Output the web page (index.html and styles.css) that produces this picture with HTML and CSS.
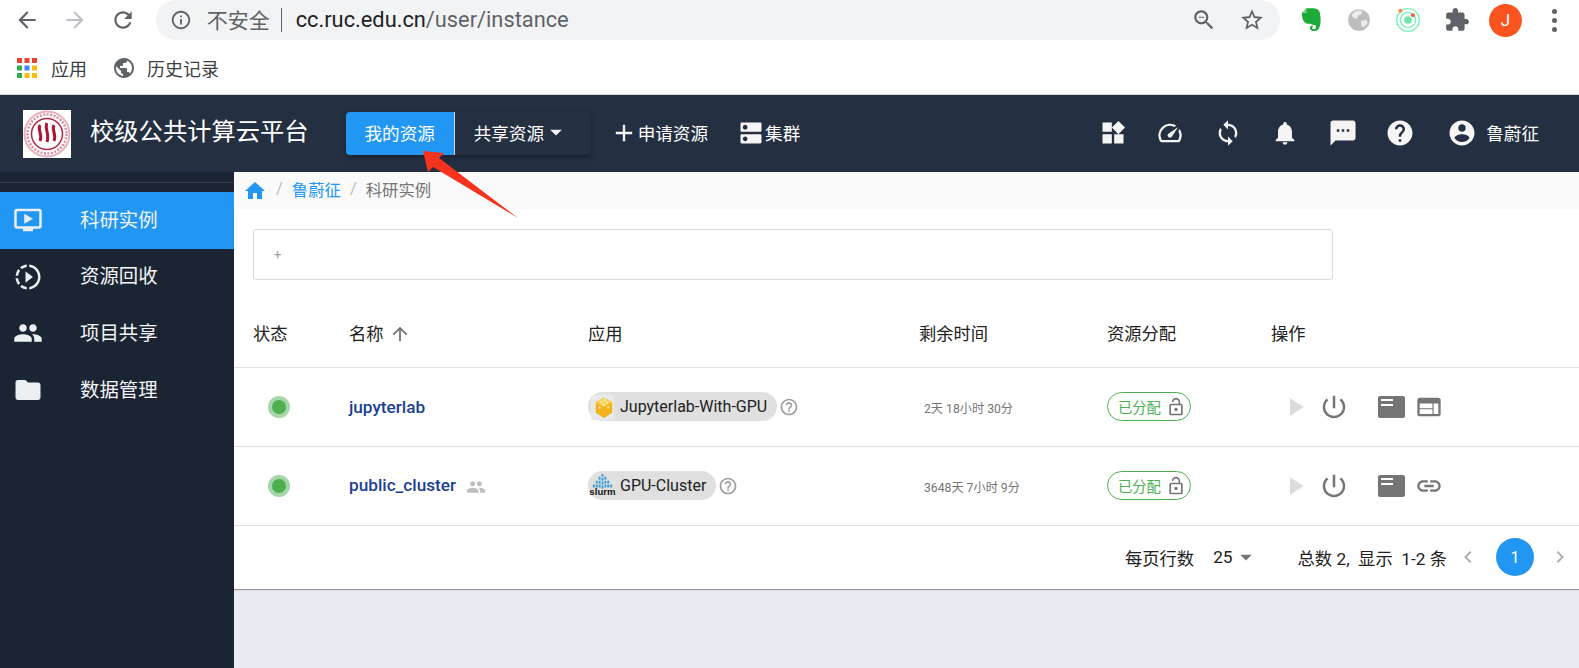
FILE: index.html
```html
<!DOCTYPE html>
<html lang="zh-CN">
<head>
<meta charset="utf-8">
<title>校级公共计算云平台</title>
<link rel="stylesheet" href="styles.css">
</head>
<body>
<svg class="defs" width="0" height="0" aria-hidden="true">
<symbol id="i-back" viewBox="0 0 24 24"><path d="M20 11H7.83l5.59-5.59L12 4l-8 8 8 8 1.41-1.41L7.83 13H20v-2z"/></symbol>
<symbol id="i-forward" viewBox="0 0 24 24"><path d="M12 4l-1.41 1.41L16.17 11H4v2h12.17l-5.58 5.59L12 20l8-8z"/></symbol>
<symbol id="i-refresh" viewBox="0 0 24 24"><path d="M17.65 6.35C16.2 4.9 14.21 4 12 4c-4.42 0-7.99 3.58-7.99 8s3.57 8 7.99 8c3.73 0 6.84-2.55 7.73-6h-2.08c-.82 2.33-3.04 4-5.65 4-3.31 0-6-2.69-6-6s2.69-6 6-6c1.66 0 3.14.69 4.22 1.78L13 11h7V4l-2.35 2.35z"/></symbol>
<symbol id="i-info" viewBox="0 0 24 24"><path d="M11 7h2v2h-2zm0 4h2v6h-2zm1-9C6.48 2 2 6.48 2 12s4.48 10 10 10 10-4.48 10-10S17.52 2 12 2zm0 18c-4.41 0-8-3.59-8-8s3.59-8 8-8 8 3.59 8 8-3.59 8-8 8z"/></symbol>
<symbol id="i-zoom" viewBox="0 0 24 24"><path d="M15.5 14h-.79l-.28-.27C15.41 12.59 16 11.11 16 9.5 16 5.91 13.09 3 9.5 3S3 5.91 3 9.5 5.91 16 9.5 16c1.61 0 3.09-.59 4.23-1.57l.27.28v.79l5 4.99L20.49 19l-4.99-5zm-6 0C7.01 14 5 11.99 5 9.5S7.01 5 9.5 5 14 7.01 14 9.5 11.99 14 9.5 14zM7 9h5v1H7z"/></symbol>
<symbol id="i-star" viewBox="0 0 24 24"><path d="M22 9.24l-7.19-.62L12 2 9.19 8.63 2 9.24l5.46 4.73L5.82 21 12 17.27 18.18 21l-1.63-7.03L22 9.24zM12 15.4l-3.76 2.27 1-4.28-3.32-2.88 4.38-.38L12 6.1l1.71 4.04 4.38.38-3.32 2.88 1 4.28L12 15.4z"/></symbol>
<symbol id="i-ext" viewBox="0 0 24 24"><path d="M20.5 11H19V7c0-1.1-.9-2-2-2h-4V3.5C13 2.12 11.88 1 10.5 1S8 2.12 8 3.5V5H4c-1.1 0-1.99.9-1.99 2v3.8H3.5c1.49 0 2.7 1.21 2.7 2.7s-1.21 2.7-2.7 2.7H2V20c0 1.1.9 2 2 2h3.8v-1.5c0-1.49 1.21-2.7 2.7-2.7 1.49 0 2.7 1.21 2.7 2.7V22H17c1.1 0 2-.9 2-2v-4h1.5c1.38 0 2.5-1.12 2.5-2.5S21.88 11 20.5 11z"/></symbol>
<symbol id="i-globe" viewBox="0 0 24 24"><path d="M12 2C6.48 2 2 6.48 2 12s4.48 10 10 10 10-4.48 10-10S17.52 2 12 2zm-1 17.93c-3.95-.49-7-3.85-7-7.93 0-.62.08-1.21.21-1.79L9 15v1c0 1.1.9 2 2 2v1.93zm6.9-2.54c-.26-.81-1-1.39-1.9-1.39h-1v-3c0-.55-.45-1-1-1H8v-2h2c.55 0 1-.45 1-1V7h2c1.1 0 2-.9 2-2v-.41c2.93 1.19 5 4.06 5 7.41 0 2.08-.8 3.97-2.1 5.39z"/></symbol>
<symbol id="i-add" viewBox="0 0 24 24"><path d="M19 13h-6v6h-2v-6H5v-2h6V5h2v6h6v2z"/></symbol>
<symbol id="i-dns" viewBox="0 0 24 24"><path d="M20 13H4c-.55 0-1 .45-1 1v6c0 .55.45 1 1 1h16c.55 0 1-.45 1-1v-6c0-.55-.45-1-1-1zM7 19c-1.1 0-2-.9-2-2s.9-2 2-2 2 .9 2 2-.9 2-2 2zM20 3H4c-.55 0-1 .45-1 1v6c0 .55.45 1 1 1h16c.55 0 1-.45 1-1V4c0-.55-.45-1-1-1zM7 9c-1.1 0-2-.9-2-2s.9-2 2-2 2 .9 2 2-.9 2-2 2z"/></symbol>
<symbol id="i-caret" viewBox="0 0 24 24"><path d="M7 10l5 5 5-5z"/></symbol>
<symbol id="i-widgets" viewBox="0 0 24 24"><path d="M13 13v8h8v-8h-8zM3 21h8v-8H3v8zM3 3v8h8V3H3zm13.66-1.31L11 7.34 16.66 13l5.66-5.66-5.66-5.65z"/></symbol>
<symbol id="i-speed" viewBox="0 0 24 24"><path d="M20.38 8.57l-1.23 1.85a8 8 0 0 1-.22 7.58H5.07A8 8 0 0 1 15.58 6.85l1.85-1.23A10 10 0 0 0 3.35 19a2 2 0 0 0 1.72 1h13.85a2 2 0 0 0 1.74-1 10 10 0 0 0-.27-10.44zm-9.79 6.84a2 2 0 0 0 2.83 0l5.66-8.49-8.49 5.66a2 2 0 0 0 0 2.83z"/></symbol>
<symbol id="i-sync" viewBox="0 0 24 24"><path d="M12 4V1L8 5l4 4V6c3.31 0 6 2.69 6 6 0 1.01-.25 1.97-.7 2.8l1.46 1.46C19.54 15.03 20 13.57 20 12c0-4.42-3.58-8-8-8zm0 14c-3.31 0-6-2.69-6-6 0-1.01.25-1.97.7-2.8L5.24 7.74C4.46 8.97 4 10.43 4 12c0 4.42 3.58 8 8 8v3l4-4-4-4v3z"/></symbol>
<symbol id="i-bell" viewBox="0 0 24 24"><path d="M12 22c1.1 0 2-.9 2-2h-4c0 1.1.89 2 2 2zm6-6v-5c0-3.07-1.64-5.64-4.5-6.32V4c0-.83-.67-1.5-1.5-1.5s-1.5.67-1.5 1.5v.68C7.63 5.36 6 7.92 6 11v5l-2 2v1h16v-1l-2-2z"/></symbol>
<symbol id="i-sms" viewBox="0 0 24 24"><path d="M20 2H4c-1.1 0-1.99.9-1.99 2L2 22l4-4h14c1.1 0 2-.9 2-2V4c0-1.1-.9-2-2-2zM9 11H7V9h2v2zm4 0h-2V9h2v2zm4 0h-2V9h2v2z"/></symbol>
<symbol id="i-help" viewBox="0 0 24 24"><path d="M12 2C6.48 2 2 6.48 2 12s4.48 10 10 10 10-4.48 10-10S17.52 2 12 2zm1 17h-2v-2h2v2zm2.07-7.75l-.9.92C13.45 12.9 13 13.5 13 15h-2v-.5c0-1.1.45-2.1 1.17-2.83l1.24-1.26c.37-.36.59-.86.59-1.41 0-1.1-.9-2-2-2s-2 .9-2 2H8c0-2.21 1.79-4 4-4s4 1.79 4 4c0 .88-.36 1.68-.93 2.25z"/></symbol>
<symbol id="i-account" viewBox="0 0 24 24"><path d="M12 2C6.48 2 2 6.48 2 12s4.48 10 10 10 10-4.48 10-10S17.52 2 12 2zm0 3c1.66 0 3 1.34 3 3s-1.34 3-3 3-3-1.34-3-3 1.34-3 3-3zm0 14.2c-2.5 0-4.71-1.28-6-3.22.03-1.99 4-3.08 6-3.08 1.99 0 5.97 1.09 6 3.08-1.29 1.94-3.5 3.22-6 3.22z"/></symbol>
<symbol id="i-video" viewBox="0 0 24 24"><path d="M21 3H3c-1.11 0-2 .89-2 2v12c0 1.1.89 2 2 2h5v2h8v-2h5c1.1 0 1.99-.9 1.99-2L23 5c0-1.11-.9-2-2-2zm0 14H3V5h18v12zm-5-6l-7 4V7z"/></symbol>
<symbol id="i-slow" viewBox="0 0 24 24"><path d="M13.05 9.79L10 7.5v9l3.05-2.29L16 12zM11 4.07V2.05c-2.01.2-3.84 1-5.32 2.21L7.1 5.69A7.941 7.941 0 0 1 11 4.07zM5.69 7.1L4.26 5.68A9.949 9.949 0 0 0 2.05 11h2.02c.18-1.46.76-2.79 1.62-3.9zM4.07 13H2.05c.2 2.01 1 3.84 2.21 5.32l1.43-1.43A7.868 7.868 0 0 1 4.07 13zm1.61 6.74A9.981 9.981 0 0 0 11 21.95v-2.02a7.941 7.941 0 0 1-3.9-1.62l-1.42 1.43zM22 12c0 5.16-3.92 9.42-8.95 9.95v-2.02C16.97 19.41 20 16.05 20 12s-3.03-7.41-6.95-7.93V2.05C18.08 2.58 22 6.84 22 12z"/></symbol>
<symbol id="i-people" viewBox="0 0 24 24"><path d="M16 11c1.66 0 2.99-1.34 2.99-3S17.66 5 16 5c-1.66 0-3 1.34-3 3s1.34 3 3 3zm-8 0c1.66 0 2.99-1.34 2.99-3S9.66 5 8 5C6.34 5 5 6.34 5 8s1.34 3 3 3zm0 2c-2.33 0-7 1.17-7 3.5V19h14v-2.5c0-2.33-4.67-3.5-7-3.5zm8 0c-.29 0-.62.02-.97.05 1.16.84 1.97 1.97 1.97 3.45V19h6v-2.5c0-2.33-4.67-3.5-7-3.5z"/></symbol>
<symbol id="i-folder" viewBox="0 0 24 24"><path d="M10 4H4c-1.1 0-1.99.9-1.99 2L2 18c0 1.1.9 2 2 2h16c1.1 0 2-.9 2-2V8c0-1.1-.9-2-2-2h-8l-2-2z"/></symbol>
<symbol id="i-home" viewBox="0 0 24 24"><path d="M10 20v-6h4v6h5v-8h3L12 3 2 12h3v8z"/></symbol>
<symbol id="i-up" viewBox="0 0 24 24"><path d="M4 12l1.41 1.41L11 7.83V20h2V7.83l5.58 5.59L20 12l-8-8-8 8z"/></symbol>
<symbol id="i-qm" viewBox="0 0 24 24"><path d="M11 18h2v-2h-2v2zm1-16C6.48 2 2 6.48 2 12s4.48 10 10 10 10-4.48 10-10S17.52 2 12 2zm0 18c-4.41 0-8-3.59-8-8s3.59-8 8-8 8 3.59 8 8-3.59 8-8 8zm0-14c-2.21 0-4 1.79-4 4h2c0-1.1.9-2 2-2s2 .9 2 2c0 2-3 1.75-3 5h2c0-2.25 3-2.5 3-5 0-2.21-1.79-4-4-4z"/></symbol>
<symbol id="i-lock" viewBox="0 0 24 24"><path d="M12 17c1.1 0 2-.9 2-2s-.9-2-2-2-2 .9-2 2 .9 2 2 2zm6-9h-1V6c0-2.76-2.24-5-5-5S7 3.24 7 6h1.9c0-1.71 1.39-3.1 3.1-3.1 1.71 0 3.1 1.39 3.1 3.1v2H6c-1.1 0-2 .9-2 2v10c0 1.1.9 2 2 2h12c1.1 0 2-.9 2-2V10c0-1.1-.9-2-2-2zm0 12H6V10h12v10z"/></symbol>
<symbol id="i-play" viewBox="0 0 24 24"><path d="M8 5v14l11-7z"/></symbol>
<symbol id="i-power" viewBox="0 0 24 24"><path d="M13 3h-2v10h2V3zm4.83 2.17l-1.42 1.42C17.99 7.86 19 9.81 19 12c0 3.87-3.13 7-7 7s-7-3.13-7-7c0-2.19 1.01-4.14 2.58-5.42L6.17 5.17C4.23 6.82 3 9.26 3 12c0 4.97 4.03 9 9 9s9-4.03 9-9c0-2.74-1.23-5.18-3.17-6.83z"/></symbol>
<symbol id="i-term" viewBox="0 0 27 22"><path fill-rule="evenodd" d="M0 2C0 .9.900 0 2 0h23c1.100 0 2 .9 2 2v18c0 1.100-.9 2-2 2H2c-1.100 0-2-.9-2-2zM3 3v2h12V3zm0 5v2h12V8z"/></symbol>
<symbol id="i-web" viewBox="0 0 24 24"><path d="M20 4H4c-1.100 0-1.990.9-1.990 2L2 18c0 1.100.9 2 2 2h16c1.100 0 2-.9 2-2V6c0-1.100-.9-2-2-2zm-5 14H4v-4h11v4zm0-5H4V9h11v4zm5 5h-4V9h4v9z"/></symbol>
<symbol id="i-link" viewBox="0 0 24 24"><path d="M3.900 12c0-1.710 1.390-3.100 3.100-3.100h4V7H7c-2.760 0-5 2.240-5 5s2.240 5 5 5h4v-1.900H7c-1.710 0-3.100-1.390-3.100-3.100zM8 13h8v-2H8v2zm9-6h-4v1.900h4c1.710 0 3.100 1.390 3.100 3.100s-1.390 3.100-3.100 3.100h-4V17h4c2.760 0 5-2.240 5-5s-2.240-5-5-5z"/></symbol>
<symbol id="i-left" viewBox="0 0 24 24"><path d="M15.410 7.410L14 6l-6 6 6 6 1.410-1.410L10.830 12z"/></symbol>
<symbol id="i-right" viewBox="0 0 24 24"><path d="M10 6L8.590 7.410 13.170 12l-4.580 4.590L10 18l6-6z"/></symbol>
</svg>

<div class="browser">
  <div class="toolbar">
    <span class="tb-btn"><svg class="ic26 c-dark"><use href="#i-back"/></svg></span>
    <span class="tb-btn"><svg class="ic26 c-faint"><use href="#i-forward"/></svg></span>
    <span class="tb-btn"><svg class="ic26 c-dark"><use href="#i-refresh"/></svg></span>
    <div class="omnibox">
      <svg class="ic22 c-dark"><use href="#i-info"/></svg>
      <span class="insecure">不安全</span>
      <span class="omni-sep"></span>
      <span class="url">cc.ruc.edu.cn<span class="url-path">/user/instance</span></span>
      <span class="omni-end">
        <svg class="ic26 c-dark"><use href="#i-zoom"/></svg>
        <svg class="ic26 c-dark"><use href="#i-star"/></svg>
      </span>
    </div>
    <div class="extensions">
      <span class="ext">
        <svg class="ic28" viewBox="0 0 24 24"><path class="ever" d="M5 6l4-4h5c3 0 6 1 6.500 4 .8 4 .8 8 0 11-.6 3-2 4.500-5 4.500-2 0-3.500-1-3.500-2.500 0-1.500 1-2.200 2.200-2.200l.6 1.300c-.7 0-1 .3-1 .8 0 .7.8 1 1.700 1 1.500 0 1.800-1.800 1.300-3.500-2-.2-3-.4-4.500-1.200-1.500.3-4 0-5.300-1.700C5.500 11.500 5 9 5 6z"/><path class="ever-fold" d="M9 2v4H5z"/></svg>
      </span>
      <span class="ext">
        <svg class="ic26" viewBox="0 0 24 24"><circle class="orb" cx="12" cy="12" r="10"/><path class="orb-land" d="M7 5c3-2 6-2 8-1l-1 3-3 1-1 3-3-1-2-2zM14 13l5-1 1 3-4 4-2-2z"/></svg>
      </span>
      <span class="ext">
        <svg class="ic26" viewBox="0 0 24 24"><circle class="ring" cx="12" cy="12" r="10.500"/><circle class="ring" cx="12" cy="12" r="7"/><circle class="ring-core" cx="12" cy="12" r="3.500"/><circle class="ring-o" cx="5" cy="3.500" r="1.800"/><circle class="ring-r" cx="16.500" cy="7.500" r="1.800"/></svg>
      </span>
      <span class="ext"><svg class="ic26 c-ext"><use href="#i-ext"/></svg></span>
      <span class="ext"><span class="avatar">J</span></span>
      <span class="ext dots"><i></i><i></i><i></i></span>
    </div>
  </div>
  <div class="bookmarks">
    <svg class="apps" viewBox="0 0 20 20">
      <rect class="a-r" x="0" y="0" width="5" height="5"/><rect class="a-r" x="7.500" y="0" width="5" height="5"/><rect class="a-r" x="15" y="0" width="5" height="5"/>
      <rect class="a-g" x="0" y="7.500" width="5" height="5"/><rect class="a-b" x="7.500" y="7.500" width="5" height="5"/><rect class="a-y" x="15" y="7.500" width="5" height="5"/>
      <rect class="a-g" x="0" y="15" width="5" height="5"/><rect class="a-y" x="7.500" y="15" width="5" height="5"/><rect class="a-y" x="15" y="15" width="5" height="5"/>
    </svg>
    <span class="bm-text">应用</span>
    <svg class="ic24 c-dark bm-globe"><use href="#i-globe"/></svg>
    <span class="bm-text bm-last">历史记录</span>
  </div>
</div>

<header class="appbar">
  <svg class="logo" viewBox="0 0 48 48">
    <rect class="logo-bg" width="48" height="48"/>
    <circle class="seal" cx="24" cy="24" r="22.500"/>
    <circle class="seal-dash" cx="24" cy="24" r="19.500"/>
    <circle class="seal-in" cx="24" cy="24" r="15.500"/>
    <path class="seal-w" d="M17 15c-3 5 3 9 0 16M24 13c-3 5 3 11 0 19M31 15c-3 5 3 9 0 16"/>
  </svg>
  <h1 class="brand">校级公共计算云平台</h1>
  <div class="tabs">
    <span class="tab tab-on">我的资源</span>
    <span class="tab tab-drop">共享资源<svg class="ic28 c-white"><use href="#i-caret"/></svg></span>
  </div>
  <span class="nav-link nav-add"><svg class="ic28 c-white"><use href="#i-add"/></svg>申请资源</span>
  <span class="nav-link nav-cluster"><svg class="ic28 c-white"><use href="#i-dns"/></svg>集群</span>
  <div class="appbar-right">
    <span class="bar-ic"><svg class="ic28 c-white"><use href="#i-widgets"/></svg></span>
    <span class="bar-ic"><svg class="ic28 c-white"><use href="#i-speed"/></svg></span>
    <span class="bar-ic"><svg class="ic28 c-white"><use href="#i-sync"/></svg></span>
    <span class="bar-ic"><svg class="ic28 c-white"><use href="#i-bell"/></svg></span>
    <span class="bar-ic"><svg class="ic30 c-white"><use href="#i-sms"/></svg></span>
    <span class="bar-ic"><svg class="ic30 c-white"><use href="#i-help"/></svg></span>
    <span class="user"><svg class="ic30 c-white"><use href="#i-account"/></svg>鲁蔚征</span>
  </div>
</header>

<div class="body-row">
  <nav class="sidebar">
    <div class="side-top"></div>
    <a class="side-item side-on"><svg class="ic30 c-soft"><use href="#i-video"/></svg><span>科研实例</span></a>
    <a class="side-item"><svg class="ic30 c-soft"><use href="#i-slow"/></svg><span>资源回收</span></a>
    <a class="side-item"><svg class="ic30 c-soft"><use href="#i-people"/></svg><span>项目共享</span></a>
    <a class="side-item"><svg class="ic30 c-soft"><use href="#i-folder"/></svg><span>数据管理</span></a>
  </nav>
  <main class="main">
    <div class="crumbs">
      <svg class="ic24 c-blue"><use href="#i-home"/></svg>
      <span class="crumb-sep">/</span>
      <span class="crumb-link">鲁蔚征</span>
      <span class="crumb-sep">/</span>
      <span class="crumb-now">科研实例</span>
    </div>
    <section class="card">
      <div class="searchbox"><span class="plus">+</span></div>
      <table class="grid">
        <thead>
          <tr>
            <th class="col-status">状态</th>
            <th class="col-name">名称<svg class="ic22 c-gray sort"><use href="#i-up"/></svg></th>
            <th class="col-app">应用</th>
            <th class="col-time">剩余时间</th>
            <th class="col-res">资源分配</th>
            <th class="col-act">操作</th>
          </tr>
        </thead>
        <tbody>
          <tr>
            <td class="cell-status"><span class="dot"></span></td>
            <td><span class="inst">jupyterlab</span></td>
            <td>
              <div class="app">
                <span class="chip">
                  <svg class="chip-ic" viewBox="0 0 30 30"><rect class="jl-bg" x="3" y="3" width="24" height="26" rx="2"/><path class="jl-a" d="M16.500 6l8.500 4.500v11l-8.500 5.500-8.500-5.500v-11z"/><path class="jl-b" d="M16.500 6l8.500 4.500-8.500 5-8.500-5z"/><path class="jl-c" d="M13 9h2v2h-2zM16.500 7.500h2v2h-2zM19 10h2v2h-2zM15 12h2v2h-2zM11 15h2v2h-2zM20 15h2v2h-2z"/></svg>
                  Jupyterlab-With-GPU
                </span>
                <svg class="ic20 c-mid"><use href="#i-qm"/></svg>
              </div>
            </td>
            <td><span class="left">2天 18小时 30分</span></td>
            <td>
              <span class="alloc">已分配<svg class="ic20 c-gray"><use href="#i-lock"/></svg></span>
            </td>
            <td>
              <div class="actions">
                <svg class="ic30 c-off"><use href="#i-play"/></svg>
                <svg class="ic30 c-gray a-power"><use href="#i-power"/></svg>
                <svg class="c-gray a-term"><use href="#i-term"/></svg>
                <svg class="ic28 c-gray a-last"><use href="#i-web"/></svg>
              </div>
            </td>
          </tr>
          <tr>
            <td class="cell-status"><span class="dot"></span></td>
            <td><span class="inst">public_cluster</span><svg class="ic20 c-light shared"><use href="#i-people"/></svg></td>
            <td>
              <div class="app">
                <span class="chip">
                  <svg class="chip-ic chip-slurm" viewBox="0 0 30 30"><path class="sl-b" d="M14 3h2v3h-2zM11 6h2v3h-2zM17 6h2v3h-2zM14 7h2v3h-2zM8 10h2v3H8zM11 10h2v3h-2zM14 11h2v3h-2zM17 10h2v3h-2zM20 10h2v3h-2zM5 14h2v3H5zM8 14h2v3H8zM11 14h2v3h-2zM14 15h2v3h-2zM17 14h2v3h-2zM20 14h2v3h-2zM23 14h2v3h-2z"/><text class="sl-t" x="15" y="25">slurm</text></svg>
                  GPU-Cluster
                </span>
                <svg class="ic20 c-mid"><use href="#i-qm"/></svg>
              </div>
            </td>
            <td><span class="left">3648天 7小时 9分</span></td>
            <td>
              <span class="alloc">已分配<svg class="ic20 c-gray"><use href="#i-lock"/></svg></span>
            </td>
            <td>
              <div class="actions">
                <svg class="ic30 c-off"><use href="#i-play"/></svg>
                <svg class="ic30 c-gray a-power"><use href="#i-power"/></svg>
                <svg class="c-gray a-term"><use href="#i-term"/></svg>
                <svg class="ic28 c-gray a-last"><use href="#i-link"/></svg>
              </div>
            </td>
          </tr>
        </tbody>
      </table>
      <footer class="pager">
        <span>每页行数</span>
        <span class="size">25</span>
        <svg class="ic28 c-gray"><use href="#i-caret"/></svg>
        <span class="total">总数 2,&nbsp;&nbsp;显示&nbsp;&nbsp;1-2 条</span>
        <svg class="ic24 c-pale pg-prev"><use href="#i-left"/></svg>
        <span class="page">1</span>
        <svg class="ic24 c-pale pg-next"><use href="#i-right"/></svg>
      </footer>
    </section>
  </main>
</div>

<svg class="annot" viewBox="0 0 1579 668" aria-hidden="true"><path class="annot-p" d="M423 151L444 153 439 158 518 218 433 167 428 172z"/></svg>
</body>
</html>
```

FILE: styles.css
```css
* { box-sizing: border-box; }
html, body { margin: 0; height: 668px; overflow: hidden; }
body {
  position: relative;
  width: 1579px;
  background: #fff;
  color: #212121;
  font-family: Roboto, "Noto Sans CJK SC", sans-serif;
  font-size: 17.6px;
}
.defs { position: absolute; }
svg { display: block; flex: none; fill: currentColor; }

.ic20 { width: 20px; height: 20px; }
.ic22 { width: 22px; height: 22px; }
.ic24 { width: 24px; height: 24px; }
.ic26 { width: 26px; height: 26px; }
.ic28 { width: 28px; height: 28px; }
.ic30 { width: 30px; height: 30px; }
.c-dark { color: #5f6368; }
.c-faint { color: #bdc1c6; }
.c-ext { color: #5f6368; }
.c-white { color: #f5f5f5; }
.c-soft { color: #eceff1; }
.c-blue { color: #2196f3; }
.c-gray { color: #757575; }
.c-mid { color: #9e9e9e; }
.c-light { color: #bdbdbd; }
.c-off { color: #dcdcdc; }
.c-pale { color: #b0b0b0; }

/* browser chrome */
.browser { height: 95px; border-bottom: 1px solid #d5d7da; }
.toolbar { display: flex; align-items: flex-start; height: 46px; padding-left: 3px; }
.tb-btn { width: 48px; height: 40px; display: flex; align-items: center; justify-content: center; }
.omnibox {
  display: flex;
  align-items: center;
  width: 1127px;
  height: 40px;
  margin-left: 9px;
  padding: 0 15px 0 14px;
  background: #f1f3f4;
  border-radius: 20px;
}
.insecure { margin-left: 15px; padding-bottom: 2px; font-size: 21px; color: #5f6368; }
.omni-sep { width: 1px; height: 24px; margin: 0 14px 0 11px; background: #5f6368; }
.url { padding-bottom: 2px; font-size: 21.8px; color: #202124; }
.url-path { color: #5f6368; }
.omni-end { display: flex; gap: 22px; margin-left: auto; }
.extensions { display: flex; align-items: center; height: 40px; margin-left: 5px; }
.ext { width: 49px; height: 40px; display: flex; align-items: center; justify-content: center; }
.ever { fill: #1eaa38; }
.ever-fold { fill: #7ed38d; }
.orb { fill: #bdbdbd; }
.orb-land { fill: #ececec; }
.ring { fill: none; stroke: #78f2bf; stroke-width: 1.3; }
.ring-core { fill: #6ee7a9; }
.ring-o { fill: #f58a3c; }
.ring-r { fill: #ee5a3a; }
.avatar {
  width: 33px; height: 33px;
  display: flex; align-items: center; justify-content: center;
  border-radius: 50%;
  background: #fb5420;
  color: #fff;
  font-size: 17px;
}
.dots { flex-direction: column; gap: 4px; }
.dots i { width: 5px; height: 5px; border-radius: 50%; background: #5f6368; }
.bookmarks { display: flex; align-items: center; height: 48px; padding: 0 0 4px 17px; font-size: 18px; color: #3c4043; }
.apps { width: 20px; height: 20px; }
.a-r { fill: #ea4335; } .a-g { fill: #34a853; } .a-b { fill: #4285f4; } .a-y { fill: #fbbc05; }
.bm-text { margin-left: 14px; }
.bm-last { margin-left: 11px; }
.bm-globe { margin-left: 25px; }

/* app bar */
.appbar { display: flex; align-items: center; height: 77px; padding: 0 0 2px 23px; background: #242f41; color: #fff; }
.logo { width: 48px; height: 48px; margin-top: 2px; }
.logo-bg { fill: #fff; }
.seal { fill: none; stroke: #e3b0bb; stroke-width: 2; }
.seal-dash { fill: none; stroke: #d98a9c; stroke-width: 2.5; stroke-dasharray: 2 1.5; }
.seal-in { fill: none; stroke: #b3233e; stroke-width: 1.5; }
.seal-w { fill: none; stroke: #ad1533; stroke-width: 3; }
.brand { margin: 0 0 0 19px; font-size: 24.3px; font-weight: 400; line-height: 1; }
.tabs { display: flex; height: 43px; margin: 2px 0 0 37px; border-radius: 4px; box-shadow: 0 2px 5px rgba(0,0,0,.35); }
.tab { display: flex; align-items: center; justify-content: center; padding-bottom: 3px; }
.tab-on { width: 109px; background: #2196f3; border-radius: 4px 0 0 4px; border-right: 1px solid #cfd8dc; }
.tab-drop { width: 136px; justify-content: flex-start; padding-left: 19px; border-radius: 0 4px 4px 0; }
.tab-drop svg { margin-left: -2px; }
.nav-link { display: flex; align-items: center; }
.nav-add { margin-left: 19px; }
.nav-cluster { margin-left: 29px; }
.appbar-right { display: flex; align-items: center; margin-left: auto; padding-right: 40px; }
.bar-ic { width: 57.5px; display: flex; justify-content: center; }
.user { display: flex; align-items: center; gap: 9px; margin-left: 18px; }

/* body */
.body-row { display: flex; height: 496px; }
.sidebar { width: 234px; background: #1b2433; flex: none; }
.side-top { height: 20px; padding-top: 10px; }
.side-top::before { content: ""; display: block; height: 1px; background: #323b4a; }
.side-item { display: flex; align-items: center; height: 56.6px; padding-left: 13px; color: #f3f5f7; font-size: 19.4px; }
.side-item span { margin-left: 37px; padding-bottom: 4px; }
.side-on { background: #2196f3; }
.main { flex: 1; background: #e9ecf0; }
.crumbs { display: flex; align-items: center; height: 37px; padding-left: 9px; background: #fafafa; font-size: 16.4px; color: #757575; }
.crumb-sep { margin: 0 9px; padding-bottom: 4px; color: #bdbdbd; }
.crumb-link { padding-bottom: 4px; color: #2196f3; }
.crumb-now { padding-bottom: 4px; }

.card { background: #fff; height: 380px; box-shadow: 0 1px 1px rgba(0,0,0,.35); padding-top: 20px; }
.searchbox { display: flex; align-items: center; width: 1080px; height: 51px; margin-left: 19px; padding-left: 20px; border: 1px solid #dcdcdc; border-radius: 3px; color: #9e9e9e; font-size: 13px; }

.grid { width: 100%; table-layout: fixed; border-collapse: collapse; }
.grid th { height: 87px; padding: 19px 0 0; text-align: left; font-weight: 400; font-size: 17.3px; border-bottom: 1px solid #e0e0e0; white-space: nowrap; }
.grid td { height: 79px; padding: 0; border-bottom: 1px solid #e0e0e0; white-space: nowrap; }
.grid th > .sort { display: inline-block; vertical-align: -5px; margin-left: 5px; }
.col-status { width: 115px; padding-left: 19px !important; }
.col-name { width: 239px; }
.col-app { width: 331px; }
.col-time { width: 188px; }
.col-res { width: 164px; }
.cell-status { padding-left: 34px !important; }
.dot {
  display: block;
  width: 22px; height: 22px;
  border-radius: 50%;
  background: #4caf50;
  border: 4.5px solid #a5d6a7;
}
.inst { color: #1c3f94; font-weight: 500; font-size: 17.2px; }
.shared { display: inline-block; vertical-align: -6px; margin-left: 10px; }
.app { display: flex; align-items: center; gap: 2px; }
.chip { display: flex; align-items: center; height: 29px; padding-right: 10px; gap: 3px; border-radius: 15px; background: #e0e0e0; font-size: 16px; }
.chip-ic { width: 29px; height: 29px; }
.jl-bg { fill: #e9e9e9; }
.jl-a { fill: #f2b21c; }
.jl-b { fill: #f9cf4e; }
.jl-c { fill: #fff1c0; }
.sl-b { fill: #3d9ad6; }
.sl-t { font: 700 10px "Liberation Sans", sans-serif; text-anchor: middle; fill: #111; }
.left { margin-left: 5px; font-size: 12.2px; color: #757575; }
.alloc {
  display: inline-flex; align-items: center; gap: 5px;
  width: 84px; height: 29px; padding-left: 10px;
  border: 1px solid #4caf50; border-radius: 15px;
  color: #4caf50; font-size: 14.3px;
}
.actions { display: flex; align-items: center; padding-left: 9px; }
.a-power { margin-left: 9px; }
.a-term { width: 27px; height: 22px; margin-left: 29px; }
.a-last { margin-left: 10px; }

.pager { display: flex; align-items: center; height: 63px; padding-left: 891px; font-size: 17.3px; }
.size { margin-left: 19px; }
.pager .c-gray { margin-left: -1px; }
.total { margin-left: 38px; white-space: nowrap; }
.pg-prev { margin-left: 9px; }
.page {
  display: flex; align-items: center; justify-content: center;
  width: 38px; height: 38px; margin-left: 16px;
  border-radius: 50%;
  background: #2196f3; color: #fff; font-size: 16px;
}
.pg-next { margin-left: 14px; }

.annot { position: absolute; left: 0; top: 0; width: 1579px; height: 668px; pointer-events: none; }
.annot-p { fill: #f5331f; }
```
